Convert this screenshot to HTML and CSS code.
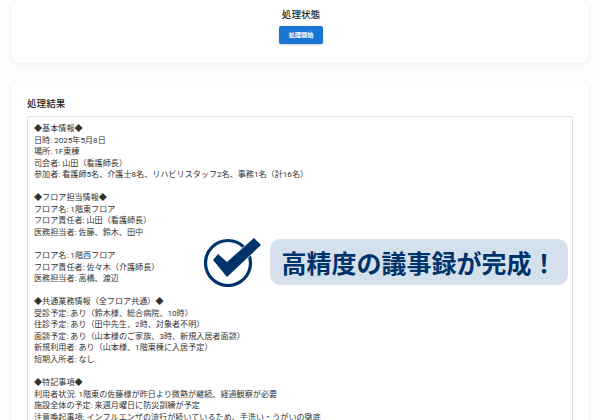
FILE: index.html
```html
<!DOCTYPE html>
<html lang="ja">
<head>
<meta charset="utf-8">
<title>処理結果</title>
<link rel="stylesheet" href="styles.css">
</head>
<body>
<main class="page">
  <section class="card status-card">
    <h2 class="status-title">処理状態</h2>
    <button class="start-btn">処理開始</button>
  </section>
  <section class="card result-card">
    <h2 class="result-title">処理結果</h2>
    <div class="result-box">◆基本情報◆
日時: 2025年5月8日
場所: 1F東棟
司会者: 山田（看護師長）
参加者: 看護師5名、介護士8名、リハビリスタッフ2名、事務1名（計16名）

◆フロア担当情報◆
フロア名: 1階東フロア
フロア責任者: 山田（看護師長）
医務担当者: 佐藤、鈴木、田中

フロア名: 1階西フロア
フロア責任者: 佐々木（介護師長）
医務担当者: 高橋、渡辺

◆共通業務情報（全フロア共通）◆
受診予定: あり（鈴木様、総合病院、10時）
往診予定: あり（田中先生、2時、対象者不明）
面談予定: あり（山本様のご家族、3時、新規入居者面談）
新規利用者: あり（山本様、1階東棟に入居予定）
短期入所者: なし

◆特記事項◆
利用者状況: 1階東の佐藤様が昨日より微熱が継続、経過観察が必要
施設全体の予定: 来週月曜日に防災訓練が予定
注意喚起事項: インフルエンザの流行が続いているため、手洗い・うがいの徹底</div>
  </section>
</main>
<div class="callout">
  <svg class="callout-icon" viewBox="0 0 58 50" width="58" height="50" aria-hidden="true">
    <circle cx="24" cy="26" r="22.5" fill="none" stroke="#00336a" stroke-width="3.2"/>
    <path d="M9 23 L14 17 L23 25 L50 1 L57 8 L23 40 Z" fill="#00336a" stroke="#fff" stroke-width="1.2" paint-order="stroke"/>
  </svg>
  <div class="callout-label">高精度の議事録が完成！</div>
</div>
</body>
</html>
```
FILE: styles.css
```css
html, body {
  margin: 0;
  height: 420px;
  overflow: hidden;
  background: #fdfdfd;
}
body {
  position: relative;
  font-family: Roboto, "Noto Sans CJK JP", sans-serif;
  color: #333;
}
.page {
  display: flex;
  flex-direction: column;
  gap: 18px;
  padding: 0 12px;
}
.card {
  background: #fff;
  border-radius: 8px;
  box-shadow: 0 1px 6px rgba(0, 0, 0, 0.05);
}
.status-card {
  height: 63px;
  display: flex;
  flex-direction: column;
  align-items: center;
  padding-top: 9px;
  box-sizing: border-box;
}
.status-title {
  margin: 0 0 5px;
  font-size: 9.6px;
  line-height: 12px;
  font-weight: 500;
  color: #222;
  position: relative;
  left: 1px;
}
.start-btn {
  width: 44px;
  height: 18px;
  padding: 0;
  border: 0;
  border-radius: 2px;
  background: #1976d2;
  color: #fff;
  font: 700 6.2px/18px Roboto, "Noto Sans CJK JP", sans-serif;
  box-shadow: 0 1px 2px rgba(0, 0, 0, 0.2);
  position: relative;
  left: 1px;
}
.result-card {
  height: 400px;
  padding: 16px 15px 0;
  box-sizing: border-box;
}
.result-title {
  margin: 0 0 6px;
  font-size: 9.6px;
  line-height: 13px;
  font-weight: 500;
  color: #222;
}
.result-box {
  border: 1px solid #e0e0e0;
  border-radius: 2px;
  padding: 6px 6px;
  white-space: pre-wrap;
  font-size: 8.1px;
  line-height: 11.55px;
  color: #333;
  height: 340px;
}
.callout {
  position: absolute;
  left: 204px;
  top: 237px;
  display: flex;
  align-items: center;
  gap: 8px;
}
.callout-icon {
  display: block;
  flex: none;
}
.callout-label {
  width: 298px;
  height: 46px;
  border-radius: 10px;
  background: #d4e0ec;
  color: #00336a;
  font-size: 25px;
  font-weight: 700;
  line-height: 46px;
  text-align: center;
  white-space: nowrap;
  font-family: "Noto Sans CJK JP", sans-serif;
}
```
